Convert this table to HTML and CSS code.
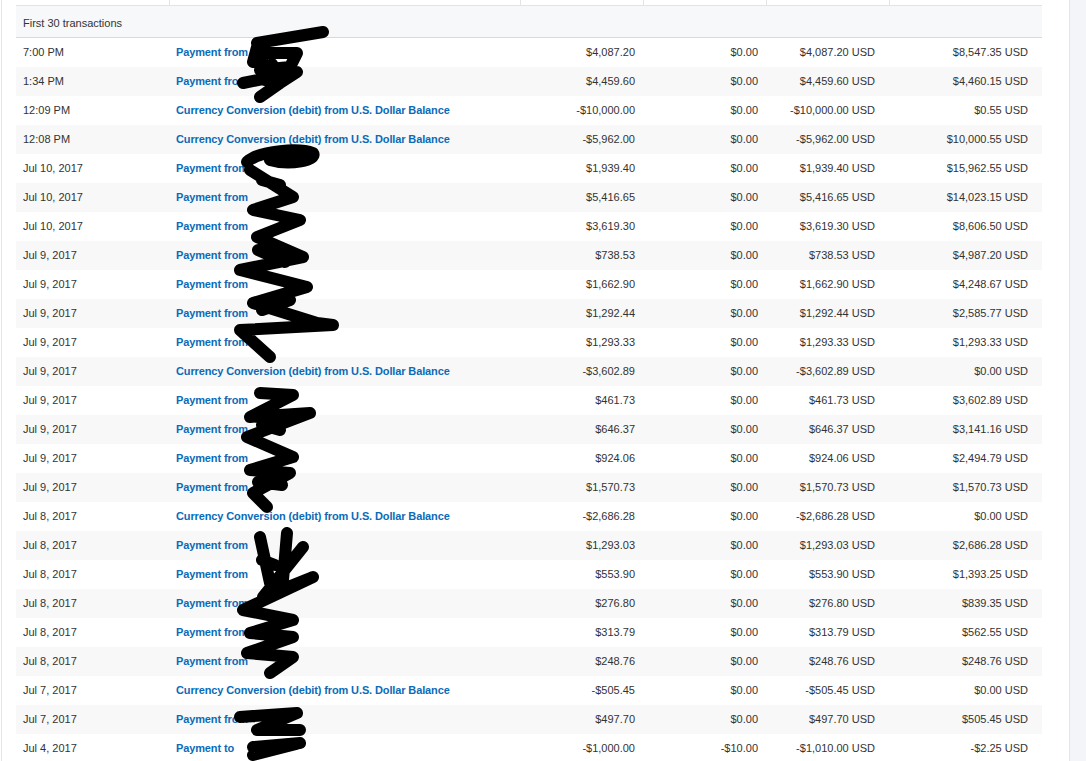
FILE: index.html
```html
<!DOCTYPE html>
<html>
<head>
<meta charset="utf-8">
<link rel="stylesheet" href="styles.css">
</head>
<body>
<div class="page">
  <div class="panel">
    <div class="table">
      <div class="row head"><div></div><div></div><div></div><div></div><div></div><div></div></div>
      <div class="section">First 30 transactions</div>
      <div id="rows"></div>
    </div>
  </div>
  <div class="side"></div>
  <svg class="scribble" width="1086" height="761" viewBox="0 0 1086 761">
    <g fill="none" stroke="#000" stroke-width="12" stroke-linecap="round" stroke-linejoin="round">
      <path d="M257 43 L323 32 M257 47 L253 62 L262 58 M260 53 L297 53 L290 67 L260 70 L272 64 M243 83 L297 72 L280 83 L260 97 M265 80 L285 78"/>
      <path d="M247 162 C260 150 300 148 313 153 C318 160 290 166 270 160 M250 170 L293 197 L253 210 L300 220 L257 237 L303 257 L240 270 L307 287 L253 303 L317 323 L333 325 L240 330 L270 357 M262 180 L280 185 M258 250 L285 262 M262 310 L290 300"/>
      <path d="M260 393 L293 395 L250 417 L310 413 L247 437 L293 457 L250 470 L290 473 L253 493 L267 507 M262 425 L280 430 M258 482 L282 485"/>
      <path d="M260 537 L270 583 M287 533 L283 580 M303 547 L263 597 L313 577 L243 610 L293 620 L250 633 L293 637 L247 653 L293 657 L270 673 M262 560 L275 565"/>
      <path d="M240 717 L297 713 L257 730 L300 730 M253 747 L300 743 L253 755"/>
    </g>
  </svg>
</div>
<script src="app.js"></script>
</body>
</html>
```
FILE: app.js
```js
const data = [
["7:00 PM","Payment from","$4,087.20","$0.00","$4,087.20 USD","$8,547.35 USD"],
["1:34 PM","Payment from","$4,459.60","$0.00","$4,459.60 USD","$4,460.15 USD"],
["12:09 PM","Currency Conversion (debit) from U.S. Dollar Balance","-$10,000.00","$0.00","-$10,000.00 USD","$0.55 USD"],
["12:08 PM","Currency Conversion (debit) from U.S. Dollar Balance","-$5,962.00","$0.00","-$5,962.00 USD","$10,000.55 USD"],
["Jul 10, 2017","Payment from","$1,939.40","$0.00","$1,939.40 USD","$15,962.55 USD"],
["Jul 10, 2017","Payment from","$5,416.65","$0.00","$5,416.65 USD","$14,023.15 USD"],
["Jul 10, 2017","Payment from","$3,619.30","$0.00","$3,619.30 USD","$8,606.50 USD"],
["Jul 9, 2017","Payment from","$738.53","$0.00","$738.53 USD","$4,987.20 USD"],
["Jul 9, 2017","Payment from","$1,662.90","$0.00","$1,662.90 USD","$4,248.67 USD"],
["Jul 9, 2017","Payment from","$1,292.44","$0.00","$1,292.44 USD","$2,585.77 USD"],
["Jul 9, 2017","Payment from","$1,293.33","$0.00","$1,293.33 USD","$1,293.33 USD"],
["Jul 9, 2017","Currency Conversion (debit) from U.S. Dollar Balance","-$3,602.89","$0.00","-$3,602.89 USD","$0.00 USD"],
["Jul 9, 2017","Payment from","$461.73","$0.00","$461.73 USD","$3,602.89 USD"],
["Jul 9, 2017","Payment from","$646.37","$0.00","$646.37 USD","$3,141.16 USD"],
["Jul 9, 2017","Payment from","$924.06","$0.00","$924.06 USD","$2,494.79 USD"],
["Jul 9, 2017","Payment from","$1,570.73","$0.00","$1,570.73 USD","$1,570.73 USD"],
["Jul 8, 2017","Currency Conversion (debit) from U.S. Dollar Balance","-$2,686.28","$0.00","-$2,686.28 USD","$0.00 USD"],
["Jul 8, 2017","Payment from","$1,293.03","$0.00","$1,293.03 USD","$2,686.28 USD"],
["Jul 8, 2017","Payment from","$553.90","$0.00","$553.90 USD","$1,393.25 USD"],
["Jul 8, 2017","Payment from","$276.80","$0.00","$276.80 USD","$839.35 USD"],
["Jul 8, 2017","Payment from","$313.79","$0.00","$313.79 USD","$562.55 USD"],
["Jul 8, 2017","Payment from","$248.76","$0.00","$248.76 USD","$248.76 USD"],
["Jul 7, 2017","Currency Conversion (debit) from U.S. Dollar Balance","-$505.45","$0.00","-$505.45 USD","$0.00 USD"],
["Jul 7, 2017","Payment from","$497.70","$0.00","$497.70 USD","$505.45 USD"],
["Jul 4, 2017","Payment to","-$1,000.00","-$10.00","-$1,010.00 USD","-$2.25 USD"]
];
const root = document.getElementById("rows");
data.forEach(r => {
  const row = document.createElement("div");
  row.className = "row";
  r.forEach((v, i) => {
    const c = document.createElement("div");
    c.className = "c" + (i + 1);
    if (i === 1) {
      const a = document.createElement("a");
      a.textContent = v;
      a.className = "link";
      c.appendChild(a);
    } else {
      c.textContent = v;
    }
    row.appendChild(c);
  });
  root.appendChild(row);
});
```
FILE: styles.css
```css
html, body {
  margin: 0;
  padding: 0;
  background: #f4f5f9;
  font-family: "Liberation Sans", Arial, sans-serif;
  font-size: 11px;
  color: #333;
  overflow: hidden;
}
.page {
  position: relative;
  display: flex;
  width: 1086px;
  height: 761px;
  background: #fff;
}
.panel {
  margin-left: 1px;
  width: 1053px;
  border-left: 1px solid #e4e5ea;
  border-right: 1px solid #e4e5ea;
  background: #fff;
  padding-left: 14px;
  box-sizing: content-box;
}
.side {
  flex: 1;
  background: #f4f5f9;
}
.table {
  width: 1026px;
}
.row {
  display: grid;
  grid-template-columns: 153px 351px 123px 123px 123px 153px;
  height: 29px;
  box-sizing: border-box;
  padding-bottom: 1px;
  align-items: center;
}
#rows .row:nth-child(even) {
  background: #f8f8f8;
}
.row.head {
  height: 6px;
  padding-bottom: 0;
  border-bottom: 1px solid #e3e3e3;
  align-items: stretch;
}
.row.head div + div {
  border-left: 1px solid #e3e3e3;
}
.section {
  height: 32px;
  box-sizing: border-box;
  padding-top: 3px;
  line-height: 28px;
  padding-left: 7px;
  background: #f7f8fa;
  border-bottom: 1px solid #d9d9dc;
}
.c1 { padding-left: 7px; }
.c2 { padding-left: 7px; white-space: nowrap; }
.c3, .c4 { text-align: right; padding-right: 8px; }
.c5, .c6 { text-align: right; padding-right: 14px; }
.link {
  color: #0b6bb8;
  font-weight: bold;
  letter-spacing: -0.12px;
}
.scribble {
  position: absolute;
  left: 0;
  top: 0;
  pointer-events: none;
}
```
